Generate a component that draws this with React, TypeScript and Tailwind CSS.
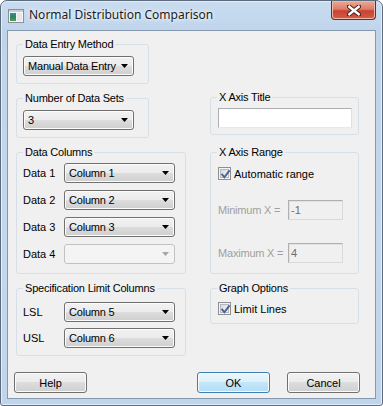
import React from "react";

function Arrow({ disabled }: { disabled?: boolean }) {
  return (
    <svg width="7" height="4" viewBox="0 0 7 4" className="shrink-0">
      <path d="M0 0 H7 L3.5 4 Z" fill={disabled ? "#a6a6a6" : "#000"} />
    </svg>
  );
}

function Combo({ text, disabled }: { text?: string; disabled?: boolean }) {
  if (disabled) {
    return (
      <div className="w-[111px] h-[20px] rounded-[3px] border border-[#c0c3c6] bg-[#f4f4f4] flex items-center justify-end pr-[5px]">
        <Arrow disabled />
      </div>
    );
  }
  return (
    <div className="w-[111px] h-[20px] rounded-[3px] border border-[#707070] bg-[linear-gradient(to_bottom,#f2f2f2_0%,#ebebeb_50%,#dddddd_50%,#cfcfcf_100%)] flex items-center pl-[4px] pr-[5px] shadow-[inset_0_0_0_1px_#fcfcfc]">
      <span className="flex-1 text-[11px] leading-[14px] text-black whitespace-nowrap tracking-[-0.2px]">{text}</span>
      <Arrow />
    </div>
  );
}

function Check() {
  return (
    <div className="w-[13px] h-[13px] border border-[#8e8f8f] bg-[#f4f4f4] p-[1px] shrink-0">
      <div className="w-full h-full border border-[#b6babf] bg-[linear-gradient(135deg,#d9dbdd_0%,#f2f2f2_100%)] relative">
        <svg width="11" height="11" viewBox="0 0 11 11" className="absolute -left-[1px] -top-[1px]">
          <path d="M2.2 5.6 L4.4 8.3 L9 2.2" stroke="#4a5f97" strokeWidth="1.9" fill="none" strokeLinecap="square" />
        </svg>
      </div>
    </div>
  );
}

function Group({
  title,
  className,
  children,
}: {
  title: string;
  className: string;
  children: React.ReactNode;
}) {
  return (
    <fieldset className={`border border-[#d5dfe5] rounded-[3px] p-0 m-0 min-w-0 ${className}`}>
      <legend className="ml-[6px] px-[2px] text-[11px] leading-[14px] text-black tracking-[-0.2px]">{title}</legend>
      {children}
    </fieldset>
  );
}

function Button({ label, def, className }: { label: string; def?: boolean; className?: string }) {
  return (
    <div
      className={`w-[73px] h-[21px] rounded-[3px] border flex items-center justify-center text-[11px] leading-[14px] text-black shadow-[inset_0_0_0_1px_#fbfbfb] ${
        def
          ? "border-[#3c7fb1] bg-[linear-gradient(to_bottom,#ecf6fc_0%,#dcf0fb_50%,#c4e6f8_50%,#b4ddf6_100%)]"
          : "border-[#707070] bg-[linear-gradient(to_bottom,#f2f2f2_0%,#ebebeb_50%,#dddddd_50%,#cfcfcf_100%)]"
      } ${className ?? ""}`}
    >
      {label}
    </div>
  );
}

function DataRow({ label, children }: { label: string; children: React.ReactNode }) {
  return (
    <div className="flex items-center h-[20px]">
      <span className="w-[41px] text-[11px] leading-[14px] text-black">{label}</span>
      {children}
    </div>
  );
}

export default function App() {
  return (
    <div className="w-[383px] h-[406px] flex flex-col rounded-t-[7px] rounded-b-[3px] border border-[#5c6b7e] bg-[linear-gradient(to_bottom,#c9dcf0_0%,#bfd4eb_8%,#c3d7ee_60%,#c0d5ec_100%)] shadow-[inset_0_0_0_1px_#e4eef9] font-['Liberation_Sans',Arial,sans-serif] overflow-hidden">
      {/* title bar */}
      <div className="h-[29px] flex items-start shrink-0">
        <svg width="16" height="16" viewBox="0 0 16 16" className="ml-[7px] mt-[7px] shrink-0">
          <defs>
            <linearGradient id="ig" x1="0" y1="0" x2="0" y2="1">
              <stop offset="0" stopColor="#3a8f9c" />
              <stop offset="0.5" stopColor="#2e7f6c" />
              <stop offset="1" stopColor="#5aa04a" />
            </linearGradient>
          </defs>
          <rect x="0.5" y="1.5" width="15" height="13" fill="#f6f6f6" stroke="#8a8f96" />
          <rect x="1" y="2" width="14" height="2" fill="#c9ced4" />
          <rect x="2" y="5" width="6" height="8" fill="url(#ig)" />
          <rect x="9" y="5" width="5" height="8" fill="#e4e8ec" />
        </svg>
        <span className="ml-[5px] mt-[5px] text-[12px] leading-[18px] text-[#1b1b1b] font-['Noto_Sans',sans-serif] [text-shadow:0_0_6px_#ffffff,0_0_3px_#ffffff]">
          Normal Distribution Comparison
        </span>
        <div className="ml-auto mr-[6px] w-[45px] h-[19px] rounded-b-[4px] border border-t-0 border-[#6e2b23] bg-[linear-gradient(to_bottom,#eaa996_0%,#dd7e69_45%,#c8412f_55%,#d0604a_100%)] shadow-[inset_0_0_0_1px_#f0b8a8] flex items-center justify-center">
          <svg width="14" height="11" viewBox="0 0 14 11">
            <path d="M2 1.5 L12 9.5 M12 1.5 L2 9.5" stroke="#4a1e18" strokeWidth="4.4" strokeLinecap="square" />
            <path d="M2.3 1.8 L11.7 9.2 M11.7 1.8 L2.3 9.2" stroke="#ffffff" strokeWidth="2.4" strokeLinecap="square" />
          </svg>
        </div>
      </div>

      {/* client area */}
      <div className="mx-[6px] h-[369px] border border-[#8598ad] bg-[#f0f0f0] flex flex-col shrink-0">
        <div className="flex items-start">
          {/* left column */}
          <div className="ml-[8px] mt-[6px] w-[170px] flex flex-col">
            <Group title="Data Entry Method" className="w-[133px] h-[47px]">
              <div className="pl-[6px] pt-[5px]">
                <Combo text="Manual Data Entry" />
              </div>
            </Group>
            <Group title="Number of Data Sets" className="mt-[7px] w-[133px] h-[47px]">
              <div className="pl-[6px] pt-[5px]">
                <Combo text="3" />
              </div>
            </Group>
            <Group title="Data Columns" className="mt-[7px] w-[170px] h-[129px]">
              <div className="pl-[6px] pt-[4px] flex flex-col gap-[7px]">
                <DataRow label="Data 1">
                  <Combo text="Column 1" />
                </DataRow>
                <DataRow label="Data 2">
                  <Combo text="Column 2" />
                </DataRow>
                <DataRow label="Data 3">
                  <Combo text="Column 3" />
                </DataRow>
                <DataRow label="Data 4">
                  <Combo disabled />
                </DataRow>
              </div>
            </Group>
            <Group title="Specification Limit Columns" className="mt-[7px] w-[170px] h-[75px]">
              <div className="pl-[6px] pt-[7px] flex flex-col gap-[6px]">
                <DataRow label="LSL">
                  <Combo text="Column 5" />
                </DataRow>
                <DataRow label="USL">
                  <Combo text="Column 6" />
                </DataRow>
              </div>
            </Group>
          </div>

          {/* right column */}
          <div className="ml-[24px] mt-[59px] w-[149px] flex flex-col">
            <Group title="X Axis Title" className="w-[149px] h-[45px]">
              <div className="pl-[7px] pt-[4px]">
                <div className="w-[134px] h-[20px] border border-[#abadb3] border-r-[#dbdfe6] border-b-[#e3e9ef] bg-white" />
              </div>
            </Group>
            <Group title="X Axis Range" className="mt-[10px] w-[149px] h-[129px]">
              <div className="pl-[7px] pt-[8px] flex flex-col">
                <div className="flex items-center h-[13px]">
                  <Check />
                  <span className="ml-[3px] text-[11px] leading-[14px] text-black">Automatic range</span>
                </div>
                <div className="mt-[20px] flex items-center h-[20px]">
                  <span className="w-[70px] text-[11px] leading-[14px] text-[#a0a0a0] tracking-[-0.2px]">Minimum X =</span>
                  <div className="w-[55px] h-[20px] border border-[#afafaf] border-r-[#d9d9d9] border-b-[#d9d9d9] bg-[#f0f0f0] flex items-center pl-[2px] text-[11px] leading-[14px] text-[#6d6d6d] shadow-[inset_1px_1px_0_#e2e2e2]">
                    -1
                  </div>
                </div>
                <div className="mt-[23px] flex items-center h-[20px]">
                  <span className="w-[70px] text-[11px] leading-[14px] text-[#a0a0a0] tracking-[-0.2px]">Maximum X =</span>
                  <div className="w-[55px] h-[20px] border border-[#afafaf] border-r-[#d9d9d9] border-b-[#d9d9d9] bg-[#f0f0f0] flex items-center pl-[2px] text-[11px] leading-[14px] text-[#6d6d6d] shadow-[inset_1px_1px_0_#e2e2e2]">
                    4
                  </div>
                </div>
              </div>
            </Group>
            <Group title="Graph Options" className="mt-[7px] w-[149px] h-[43px]">
              <div className="pl-[7px] pt-[7px]">
                <div className="flex items-center h-[13px]">
                  <Check />
                  <span className="ml-[3px] text-[11px] leading-[14px] text-black">Limit Lines</span>
                </div>
              </div>
            </Group>
          </div>
        </div>

        {/* buttons */}
        <div className="mt-[16px] flex items-center pl-[6px]">
          <Button label="Help" />
          <Button label="OK" def className="ml-[110px] w-[72px]" />
          <Button label="Cancel" className="ml-[17px] w-[72px]" />
        </div>
      </div>
    </div>
  );
}
